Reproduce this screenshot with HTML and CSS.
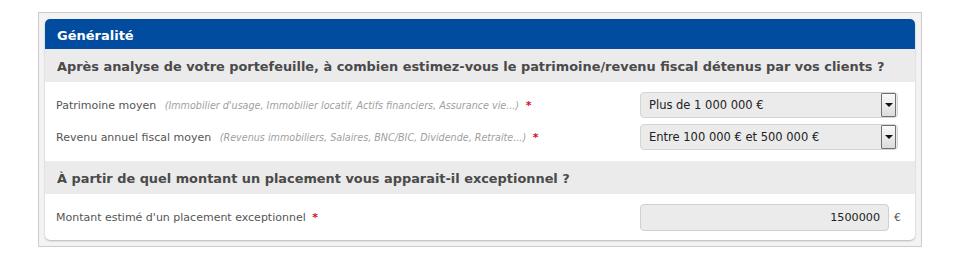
FILE: index.html
```html
<!DOCTYPE html>
<html lang="fr">
<head>
<meta charset="utf-8">
<title>Généralité</title>
<link rel="stylesheet" href="styles.css">
</head>
<body>
<div class="frame">
  <div class="panel">
    <div class="panel-head">Généralité</div>
    <div class="question">Après analyse de votre portefeuille, à combien estimez-vous le patrimoine/revenu fiscal détenus par vos clients ?</div>
    <div class="rows">
      <div class="row">
        <div class="label">Patrimoine moyen <span class="hint">(Immobilier d'usage, Immobilier locatif, Actifs financiers, Assurance vie...)</span> <span class="req">*</span></div>
        <div class="select"><span class="value">Plus de 1 000 000 €</span><span class="arrow"></span></div>
      </div>
      <div class="row">
        <div class="label">Revenu annuel fiscal moyen <span class="hint">(Revenus immobiliers, Salaires, BNC/BIC, Dividende, Retraite...)</span> <span class="req">*</span></div>
        <div class="select"><span class="value">Entre 100 000 € et 500 000 €</span><span class="arrow"></span></div>
      </div>
    </div>
    <div class="question">À partir de quel montant un placement vous apparait-il exceptionnel ?</div>
    <div class="rows rows-last">
      <div class="row">
        <div class="label">Montant estimé d'un placement exceptionnel <span class="req">*</span></div>
        <div class="amount"><span class="input">1500000</span><span class="unit">€</span></div>
      </div>
    </div>
  </div>
</div>
</body>
</html>
```
FILE: styles.css
```css
html, body {
  margin: 0;
  padding: 0;
  background: #ffffff;
}
body {
  font-family: "DejaVu Sans", Verdana, sans-serif;
  font-size: 11px;
  color: #555555;
}
.frame {
  width: 870px;
  margin: 12px auto 0;
  padding: 6px;
  border: 1px solid #cccccc;
  background: #f3f3f3;
}
.panel {
  background: #ffffff;
  border-radius: 5px;
  box-shadow: 0 1px 2px rgba(0,0,0,0.25);
  overflow: hidden;
}
.panel-head {
  height: 29px;
  padding-top: 1px;
  line-height: 31px;
  background: #014c9f;
  color: #ffffff;
  font-weight: bold;
  font-size: 13px;
  padding-left: 12px;
}
.question {
  height: 32px;
  padding-top: 1px;
  line-height: 34px;
  background: #ebebeb;
  color: #4a4a4a;
  font-weight: bold;
  font-size: 12.9px;
  padding-left: 12px;
  white-space: nowrap;
}
.rows {
  padding: 10px 0 11px 11px;
  display: flex;
  flex-direction: column;
  gap: 6px;
}
.rows-last {
  padding-top: 10px;
  padding-bottom: 10px;
}
.row {
  display: flex;
  align-items: center;
  justify-content: space-between;
  height: 26px;
}
.label {
  white-space: nowrap;
}
.hint {
  font-style: italic;
  font-size: 9.6px;
  color: #a0a0a0;
  margin-left: 5px;
}
.req {
  color: #d0102a;
  font-weight: bold;
  margin-left: 3px;
}
.select {
  width: 256px;
  height: 24px;
  margin-right: 17px;
  border: 1px solid #d4d4d4;
  border-radius: 4px;
  background: #ebebeb;
  display: flex;
  align-items: center;
  justify-content: space-between;
  color: #222222;
  font-size: 11.5px;
}
.select .value {
  padding-left: 8px;
}
.arrow {
  position: relative;
  width: 13px;
  height: 22px;
  margin-right: 1px;
  border: 1px solid #707070;
  border-radius: 1px;
  background: linear-gradient(#fafafa, #dcdcdc);
}
.arrow::after {
  content: "";
  position: absolute;
  left: 3px;
  top: 9px;
  border-left: 4px solid transparent;
  border-right: 4px solid transparent;
  border-top: 4px solid #111111;
}
.amount {
  display: flex;
  align-items: center;
  margin-right: 14px;
}
.input {
  width: 239px;
  height: 25px;
  line-height: 25px;
  padding-right: 8px;
  text-align: right;
  border: 1px solid #d0d0d0;
  border-radius: 4px;
  background: #ebebeb;
  color: #222222;
  font-size: 11.2px;
}
.unit {
  margin-left: 5px;
  color: #555555;
}
```
